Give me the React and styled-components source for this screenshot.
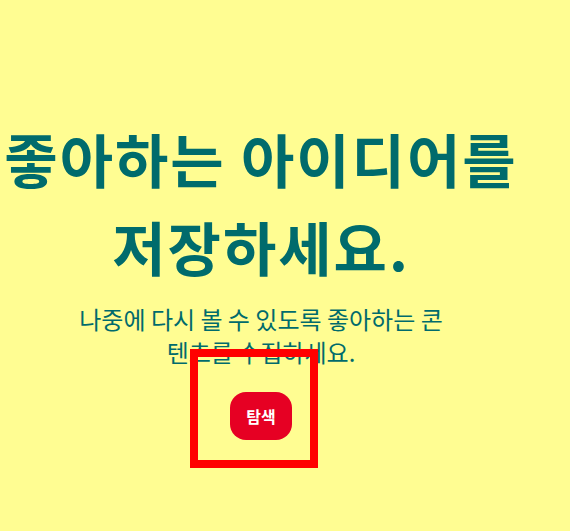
import React from 'react';
import styled, { createGlobalStyle } from 'styled-components';

const GlobalStyle = createGlobalStyle`
  html, body {
    margin: 0;
    padding: 0;
    background-color: #fffd92;
  }
  body {
    font-family: "Noto Sans CJK KR", "Noto Sans", sans-serif;
  }
`

const Page = styled.div`
  width: 570px;
  height: 531px;
  background-color: #fffd92;
  overflow: hidden;
`
const Content = styled.div`
  width: 522px;
  padding-top: 114px;
  display: flex;
  flex-flow: column nowrap;
  align-items: center;
  text-align: center;
`
const Title = styled.h1`
  margin: 0;
  width: 100%;
  font-size: 58px;
  font-weight: 700;
  line-height: 88px;
  letter-spacing: 2px;
  color: #006b6c;
`
const Desc = styled.p`
  margin: 12px 0 0;
  width: 380px;
  font-size: 24px;
  line-height: 33px;
  color: #006b6c;
`
const ButtonWrap = styled.div`
  position: relative;
  margin-top: 24px;
`
const ExploreButton = styled.button`
  display: block;
  height: 48px;
  padding: 0 16px;
  border: none;
  outline: none;
  border-radius: 16px;
  background-color: #e60023;
  color: white;
  font-family: inherit;
  font-size: 16px;
  font-weight: 700;
  cursor: pointer;
`
const Highlight = styled.div`
  position: absolute;
  left: -40px;
  top: -43px;
  width: 128px;
  height: 119px;
  box-sizing: border-box;
  border: 8px solid #ff0000;
  pointer-events: none;
`

function App () {
  return (
    <>
      <GlobalStyle />
      <Page>
        <Content>
          <Title>좋아하는 아이디어를 저장하세요.</Title>
          <Desc>나중에 다시 볼 수 있도록 좋아하는 콘텐츠를 수집하세요.</Desc>
          <ButtonWrap>
            <ExploreButton>탐색</ExploreButton>
            <Highlight />
          </ButtonWrap>
        </Content>
      </Page>
    </>
  )
};

export default App;
